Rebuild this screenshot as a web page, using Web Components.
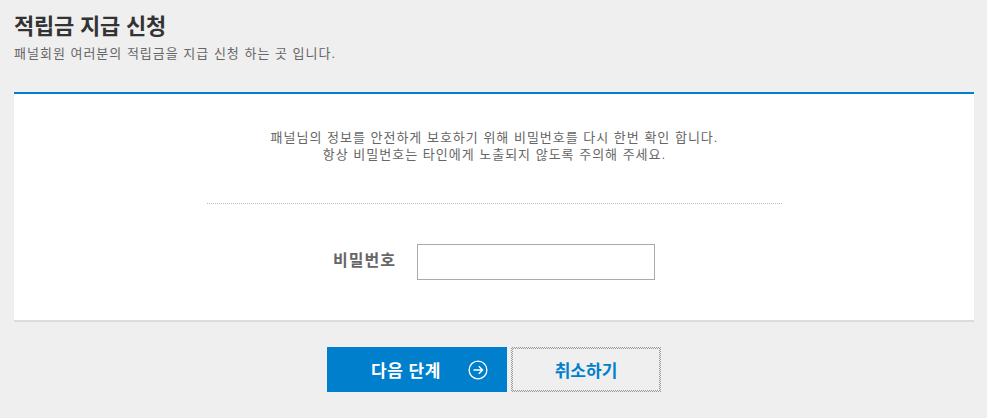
<!DOCTYPE html>
<html lang="ko">
<head>
<meta charset="utf-8">
<title>적립금 지급 신청</title>
<style>
  html, body { margin: 0; background: #efefef; }
  body { font-family: "Liberation Sans", "Noto Sans CJK KR", sans-serif; color: #666; }
</style>
</head>
<body>
<point-page>
  <page-title slot="head" heading="적립금 지급 신청">패널회원 여러분의 적립금을 지급 신청 하는 곳 입니다.</page-title>
  <password-panel>
    <span>패널님의 정보를 안전하게 보호하기 위해 비밀번호를 다시 한번 확인 합니다.</span>
    <span>항상 비밀번호는 타인에게 노출되지 않도록 주의해 주세요.</span>
  </password-panel>
  <form-actions></form-actions>
</point-page>

<script>
class PointPage extends HTMLElement {
    constructor() {
        super();
        this.attachShadow({mode: 'open'});
        this.shadowRoot.innerHTML = `
        <style>
            :host { display: block; padding: 0 13px 0 14px; }
        </style>
        <slot name="head"></slot>
        <slot></slot>`;
    }
}

class PageTitle extends HTMLElement {
    constructor() {
        super();
        this.attachShadow({mode: 'open'});
        this.shadowRoot.innerHTML = `
        <style>
            :host { display: block; height: 92px; padding-top: 12px; box-sizing: border-box; }
            h1 { margin: 0 0 3px; font-size: 22px; line-height: 30px; font-weight: 700; color: #333; letter-spacing: -.2px; }
            p { margin: 0; font-size: 13px; line-height: 18px; color: #666; letter-spacing: 1px; }
        </style>
        <h1></h1>
        <p><slot></slot></p>`;
    }
    connectedCallback() {
        this.shadowRoot.querySelector('h1').textContent = this.getAttribute('heading');
    }
}

class PasswordPanel extends HTMLElement {
    constructor() {
        super();
        this.attachShadow({mode: 'open'});
        this.shadowRoot.innerHTML = `
        <style>
            :host {
                display: block; height: 226px; box-sizing: content-box;
                background: #fff; border-top: 2px solid #0080cc; border-bottom: 2px solid #dcdcdc;
            }
            .notice {
                display: flex; flex-direction: column; align-items: center;
                height: 110px; padding-top: 35px; box-sizing: border-box;
                margin: 0 192px 0 193px; border-bottom: 1px dotted #bbb;
                font-size: 13px; line-height: 17px; color: #666; letter-spacing: 1px;
            }
            .row { display: flex; justify-content: center; align-items: center; gap: 21px; margin-top: 40px; }
            label { font-size: 16px; font-weight: 700; color: #666; letter-spacing: 1px; position: relative; top: -3px; }
            input { width: 238px; height: 36px; box-sizing: border-box; border: 1px solid #aaa; background: #fff; padding: 0 8px; outline: 0; }
        </style>
        <div class="notice"><slot></slot></div>
        <div class="row"><label for="pw">비밀번호</label><input id="pw" type="password"></div>`;
    }
}

class FormActions extends HTMLElement {
    constructor() {
        super();
        this.attachShadow({mode: 'open'});
        this.shadowRoot.innerHTML = `
        <style>
            :host { display: flex; justify-content: center; gap: 4px; margin-top: 25px; }
            button {
                display: flex; align-items: center; justify-content: center;
                height: 45px; box-sizing: border-box; padding: 0; margin: 0;
                font: 700 17px "Liberation Sans", "Noto Sans CJK KR", sans-serif; cursor: pointer;
            }
            .next { width: 180px; background: #0080cc; color: #fff; border: 0; gap: 27px; padding-left: 25px; letter-spacing: .5px; }
            /* checkered 2px edge, the look of the focus ring */
            .cancel {
                width: 150px; color: #0080cc; border: 2px solid transparent;
                background:
                    linear-gradient(#efefef, #efefef) padding-box,
                    repeating-conic-gradient(#999 0 25%, #efefef 0 50%) 0 0 / 2px 2px border-box;
            }
            svg { display: block; }
        </style>
        <button class="next" type="button">다음 단계
            <svg width="20" height="20" viewBox="0 0 20 20" fill="none" stroke="#fff" stroke-width="1.3">
                <circle cx="10" cy="10" r="8.9"/>
                <path d="M5.5 10h9M10.8 6.2 14.6 10l-3.8 3.8"/>
            </svg>
        </button>
        <button class="cancel" type="button">취소하기</button>`;
    }
}

customElements.define('point-page', PointPage);
customElements.define('page-title', PageTitle);
customElements.define('password-panel', PasswordPanel);
customElements.define('form-actions', FormActions);
</script>
</body>
</html>
